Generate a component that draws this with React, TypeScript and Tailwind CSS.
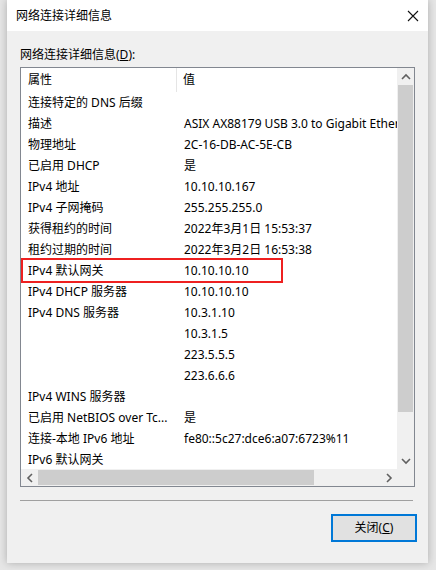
import React from "react";

const rows: [string, string][] = [
  ["连接特定的 DNS 后缀", ""],
  ["描述", "ASIX AX88179 USB 3.0 to Gigabit Ethernet Adapter"],
  ["物理地址", "2C-16-DB-AC-5E-CB"],
  ["已启用 DHCP", "是"],
  ["IPv4 地址", "10.10.10.167"],
  ["IPv4 子网掩码", "255.255.255.0"],
  ["获得租约的时间", "2022年3月1日 15:53:37"],
  ["租约过期的时间", "2022年3月2日 16:53:38"],
  ["IPv4 默认网关", "10.10.10.10"],
  ["IPv4 DHCP 服务器", "10.10.10.10"],
  ["IPv4 DNS 服务器", "10.3.1.10"],
  ["", "10.3.1.5"],
  ["", "223.5.5.5"],
  ["", "223.6.6.6"],
  ["IPv4 WINS 服务器", ""],
  ["已启用 NetBIOS over Tc...", "是"],
  ["连接-本地 IPv6 地址", "fe80::5c27:dce6:a07:6723%11"],
  ["IPv6 默认网关", ""],
];

const font = { fontFamily: '"Noto Sans", "Noto Sans CJK SC", sans-serif' };

function Chevron({ dir }: { dir: "up" | "down" | "left" | "right" }) {
  const d =
    dir === "up"
      ? "M1 6 L5 2 L9 6"
      : dir === "down"
      ? "M1 2 L5 6 L9 2"
      : dir === "left"
      ? "M6 1 L2 5 L6 9"
      : "M2 1 L6 5 L2 9";
  const w = dir === "up" || dir === "down" ? 10 : 8;
  const h = dir === "up" || dir === "down" ? 8 : 10;
  return (
    <svg width={w} height={h} viewBox={`0 0 ${w} ${h}`}>
      <path d={d} fill="none" stroke="#606060" strokeWidth="1.6" />
    </svg>
  );
}

export default function App() {
  return (
    <div
      className="w-[436px] h-[570px] bg-[#e6e6e6] overflow-hidden text-[12px] text-black"
      style={font}
    >
      <div className="ml-[7px] w-[421px] h-[563px] flex flex-col bg-[#f0f0f0] shadow-[0_0_8px_rgba(0,0,0,0.25)]">
        {/* Title bar */}
        <div className="h-[31px] bg-white flex items-center justify-between pl-[9px] pr-[9px] shrink-0">
          <span className="leading-none">网络连接详细信息</span>
          <svg width="12" height="12" viewBox="0 0 12 12">
            <path d="M1 1 L11 11 M11 1 L1 11" stroke="#111" strokeWidth="1.1" />
          </svg>
        </div>
        {/* Body */}
        <div className="flex flex-col pl-[13px] pr-[11px] pt-[16px]">
          <div className="h-[16px] leading-[16px] mb-[4px]">
            网络连接详细信息(<span className="underline">D</span>):
          </div>
          {/* List box */}
          <div className="w-[395px] h-[420px] border border-[#828790] bg-white flex flex-col">
            <div className="flex flex-1 min-h-0">
              <div className="flex-1 min-w-0 overflow-hidden">
                {/* header */}
                <div className="flex h-[24px] items-center">
                  <div className="w-[156px] shrink-0 pl-[7px] h-full flex items-center border-r border-[#e5e5e5]">
                    属性
                  </div>
                  <div className="pl-[6px]">值</div>
                </div>
                {rows.map(([k, v], i) => {
                  const hl = i === 8;
                  return (
                    <div key={i} className="h-[21px] flex items-center">
                      <div
                        className={
                          hl
                            ? "flex items-center h-[25px] border-2 border-[#ee2020] -ml-[0px] w-[262px] shrink-0"
                            : "flex items-center w-full"
                        }
                      >
                        <div
                          className={
                            hl
                              ? "w-[154px] shrink-0 pl-[5px] whitespace-nowrap"
                              : "w-[156px] shrink-0 pl-[7px] whitespace-nowrap"
                          }
                        >
                          {k}
                        </div>
                        <div className="pl-[7px] whitespace-nowrap">{v}</div>
                      </div>
                    </div>
                  );
                })}
              </div>
              {/* vertical scrollbar */}
              <div className="w-[17px] bg-[#f0f0f0] flex flex-col items-center shrink-0">
                <div className="h-[17px] flex items-center justify-center">
                  <Chevron dir="up" />
                </div>
                <div className="w-[17px] flex-1 flex flex-col">
                  <div className="h-[327px] mx-[1px] bg-[#cdcdcd]" />
                </div>
                <div className="h-[17px] flex items-center justify-center">
                  <Chevron dir="down" />
                </div>
              </div>
            </div>
            {/* horizontal scrollbar */}
            <div className="h-[17px] flex shrink-0">
              <div className="flex-1 bg-[#f0f0f0] flex items-center">
                <div className="w-[17px] h-full flex items-center justify-center">
                  <Chevron dir="left" />
                </div>
                <div className="flex-1 h-full flex items-center">
                  <div className="w-[276px] h-[15px] bg-[#cdcdcd]" />
                </div>
                <div className="w-[17px] h-full flex items-center justify-center">
                  <Chevron dir="right" />
                </div>
              </div>
              <div className="w-[17px] bg-[#f0f0f0]" />
            </div>
          </div>
          {/* separator */}
          <div className="mt-[13px] w-[393px] h-px bg-[#a0a0a0]" />
          {/* button */}
          <div className="flex justify-end mt-[13px]">
            <div className="w-[86px] h-[28px] border-2 border-[#0078d7] bg-[#e1e1e1] flex items-center justify-center">
              关闭(<span className="underline">C</span>)
            </div>
          </div>
        </div>
      </div>
    </div>
  );
}
